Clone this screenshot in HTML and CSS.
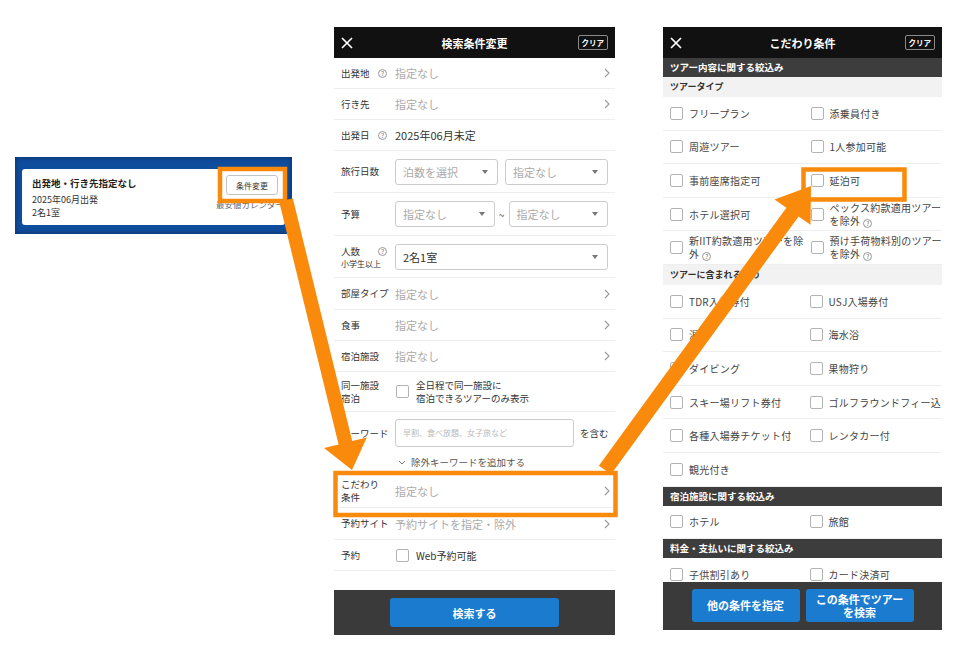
FILE: index.html
```html
<!DOCTYPE html>
<html lang="ja">
<head>
    <meta charset="UTF-8">
    <title>検索条件変更</title>
    <link rel="stylesheet" href="styles.css">
</head>
<body>
<div class="stage">

    <!-- search summary card -->
    <div class="summary">
        <div class="summary-card">
            <div class="summary-info">
                <p class="summary-title">出発地・行き先指定なし</p>
                <p>2025年06月出発</p>
                <p>2名1室</p>
            </div>
            <div class="summary-side">
                <button class="btn-change">条件変更</button>
                <span class="cal-link">最安値カレンダー</span>
            </div>
        </div>
    </div>

    <!-- search conditions panel -->
    <div class="panel panel-search">
        <div class="panel-head">
            <svg class="close" viewBox="0 0 12 12"><path d="M1 1L11 11M11 1L1 11" stroke="#fff" stroke-width="1.7"/></svg>
            <h1>検索条件変更</h1>
            <span class="clear">クリア</span>
        </div>
        <div class="panel-body">
            <div class="row">
                <div class="label">出発地<i class="help">?</i></div>
                <div class="value muted">指定なし</div>
                <svg class="chev" viewBox="0 0 6 10"><path d="M1 1l4 4-4 4" fill="none" stroke="#999" stroke-width="1.1"/></svg>
            </div>
            <div class="row">
                <div class="label">行き先</div>
                <div class="value muted">指定なし</div>
                <svg class="chev" viewBox="0 0 6 10"><path d="M1 1l4 4-4 4" fill="none" stroke="#999" stroke-width="1.1"/></svg>
            </div>
            <div class="row">
                <div class="label">出発日<i class="help">?</i></div>
                <div class="value">2025年06月未定</div>
            </div>
            <div class="row row-42">
                <div class="label">旅行日数</div>
                <div class="select-pair">
                    <div class="select">泊数を選択</div>
                    <div class="select">指定なし</div>
                </div>
            </div>
            <div class="row row-43">
                <div class="label">予算</div>
                <div class="select-pair tight">
                    <div class="select">指定なし</div>
                    <span class="tilde">~</span>
                    <div class="select">指定なし</div>
                </div>
            </div>
            <div class="row row-42">
                <div class="label label-stack">
                    <div class="label-line">人数<i class="help">?</i></div>
                    <small>小学生以上</small>
                </div>
                <div class="select-pair">
                    <div class="select filled">2名1室</div>
                </div>
            </div>
            <div class="row row-32">
                <div class="label">部屋タイプ</div>
                <div class="value muted">指定なし</div>
                <svg class="chev" viewBox="0 0 6 10"><path d="M1 1l4 4-4 4" fill="none" stroke="#999" stroke-width="1.1"/></svg>
            </div>
            <div class="row">
                <div class="label">食事</div>
                <div class="value muted">指定なし</div>
                <svg class="chev" viewBox="0 0 6 10"><path d="M1 1l4 4-4 4" fill="none" stroke="#999" stroke-width="1.1"/></svg>
            </div>
            <div class="row">
                <div class="label">宿泊施設</div>
                <div class="value muted">指定なし</div>
                <svg class="chev" viewBox="0 0 6 10"><path d="M1 1l4 4-4 4" fill="none" stroke="#999" stroke-width="1.1"/></svg>
            </div>
            <div class="row row-40">
                <div class="label label-two">同一施設<br>宿泊</div>
                <div class="value check-value">
                    <span class="check"></span>
                    <span class="small-text">全日程で同一施設に<br>宿泊できるツアーのみ表示</span>
                </div>
            </div>
            <div class="kw">
                <div class="kw-line">
                    <div class="label">キーワード</div>
                    <div class="kw-input">早割、食べ放題、女子旅など</div>
                    <span class="kw-suffix">を含む</span>
                </div>
                <div class="kw-more">
                    <svg class="chev-down" viewBox="0 0 8 5"><path d="M1 1l3 3 3-3" fill="none" stroke="#777" stroke-width="1"/></svg>
                    除外キーワードを追加する
                </div>
            </div>
            <div class="row row-33">
                <div class="label label-two">こだわり<br>条件</div>
                <div class="value muted">指定なし</div>
                <svg class="chev" viewBox="0 0 6 10"><path d="M1 1l4 4-4 4" fill="none" stroke="#999" stroke-width="1.1"/></svg>
            </div>
            <div class="row row-32">
                <div class="label">予約サイト</div>
                <div class="value muted">予約サイトを指定・除外</div>
                <svg class="chev" viewBox="0 0 6 10"><path d="M1 1l4 4-4 4" fill="none" stroke="#999" stroke-width="1.1"/></svg>
            </div>
            <div class="row">
                <div class="label">予約</div>
                <div class="value check-value">
                    <span class="check"></span>
                    <span class="web-text">Web予約可能</span>
                </div>
            </div>
        </div>
        <div class="panel-foot">
            <button class="btn-blue btn-search">検索する</button>
        </div>
    </div>

    <!-- kodawari panel -->
    <div class="panel panel-kodawari">
        <div class="panel-head">
            <svg class="close" viewBox="0 0 12 12"><path d="M1 1L11 11M11 1L1 11" stroke="#fff" stroke-width="1.7"/></svg>
            <h1>こだわり条件</h1>
            <span class="clear">クリア</span>
        </div>
        <div class="panel-body">
            <div class="sec">ツアー内容に関する絞込み</div>
            <div class="sub">ツアータイプ</div>
            <div class="opts">
                <div class="opt"><span class="check"></span><span>フリープラン</span></div>
                <div class="opt"><span class="check"></span><span>添乗員付き</span></div>
                <div class="opt"><span class="check"></span><span>周遊ツアー</span></div>
                <div class="opt"><span class="check"></span><span>1人参加可能</span></div>
                <div class="opt"><span class="check"></span><span>事前座席指定可</span></div>
                <div class="opt"><span class="check"></span><span>延泊可</span></div>
                <div class="opt"><span class="check"></span><span>ホテル選択可</span></div>
                <div class="opt"><span class="check"></span><span>ペックス約款適用ツアー<br>を除外<i class="help inline">?</i></span></div>
                <div class="opt"><span class="check"></span><span class="nowrap">新IIT約款適用ツアーを除<br>外<i class="help inline">?</i></span></div>
                <div class="opt"><span class="check"></span><span>預け手荷物料別のツアー<br>を除外<i class="help inline">?</i></span></div>
            </div>
            <div class="sub">ツアーに含まれるもの</div>
            <div class="opts">
                <div class="opt"><span class="check"></span><span>TDR入場券付</span></div>
                <div class="opt"><span class="check"></span><span>USJ入場券付</span></div>
                <div class="opt"><span class="check"></span><span>温泉</span></div>
                <div class="opt"><span class="check"></span><span>海水浴</span></div>
                <div class="opt"><span class="check"></span><span>ダイビング</span></div>
                <div class="opt"><span class="check"></span><span>果物狩り</span></div>
                <div class="opt"><span class="check"></span><span>スキー場リフト券付</span></div>
                <div class="opt"><span class="check"></span><span class="nowrap">ゴルフラウンドフィー込</span></div>
                <div class="opt"><span class="check"></span><span>各種入場券チケット付</span></div>
                <div class="opt"><span class="check"></span><span>レンタカー付</span></div>
                <div class="opt"><span class="check"></span><span>観光付き</span></div>
                <div class="opt"></div>
            </div>
            <div class="sec">宿泊施設に関する絞込み</div>
            <div class="opts">
                <div class="opt"><span class="check"></span><span>ホテル</span></div>
                <div class="opt"><span class="check"></span><span>旅館</span></div>
            </div>
            <div class="sec">料金・支払いに関する絞込み</div>
            <div class="opts">
                <div class="opt"><span class="check"></span><span>子供割引あり</span></div>
                <div class="opt"><span class="check"></span><span>カード決済可</span></div>
            </div>
        </div>
        <div class="panel-foot foot-two">
            <button class="btn-blue btn-half">他の条件を指定</button>
            <button class="btn-blue btn-half">この条件でツアー<br>を検索</button>
        </div>
    </div>

    <!-- orange annotations drawn over the screens -->
    <svg class="overlay" viewBox="0 0 961 658">
        <g fill="none" stroke="#f98a0b" stroke-width="4.5">
            <rect x="220" y="169" width="65" height="32"/>
            <rect x="335.5" y="473" width="280" height="42"/>
            <rect x="803.5" y="169.5" width="101" height="30"/>
        </g>
        <g fill="#f98a0b">
            <polygon points="279.2,201.7 292.8,198.3 352.2,441.1 366.8,437.6 352,470 324,448 338.6,444.5"/>
            <polygon points="598.9,465.7 611.1,474.3 798.6,216.4 810.5,224.8 811,186 774.5,199.4 786.4,207.8"/>
        </g>
    </svg>
</div>
</body>
</html>
```

FILE: styles.css
```css
* {
    box-sizing: border-box;
}
body {
    margin: 0;
    background: #fff;
    font-family: "Noto Sans CJK JP", "Noto Sans", sans-serif;
    color: #333;
}
p, h1 {
    margin: 0;
}
.stage {
    position: relative;
    width: 961px;
    height: 658px;
    display: flex;
    align-items: flex-start;
    padding: 27px 0 0 15px;
    overflow: hidden;
}

/* summary card on the left */
.summary {
    width: 277px;
    height: 77px;
    margin-top: 130px;
    padding: 12px 7px 9px 7px;
    background: #0e4c9c;
    box-shadow: inset 0 0 5px rgba(0, 0, 0, 0.4);
}
.summary-card {
    display: flex;
    height: 56px;
    background: #fff;
    border-radius: 3px;
    padding: 7px 7px 0 10px;
    overflow: hidden;
}
.summary-info {
    flex: 1;
    font-size: 9px;
    line-height: 13px;
    color: #333;
}
.summary-title {
    font-size: 9.5px;
    font-weight: bold;
    line-height: 14px;
    color: #222;
    margin-bottom: 2.5px;
}
.summary-side {
    display: flex;
    flex-direction: column;
    align-items: flex-end;
}
.btn-change {
    margin-top: -1px;
    width: 52px;
    height: 20px;
    padding: 0;
    font-family: inherit;
    font-size: 8px;
    color: #333;
    background: #fff;
    border: 1px solid #c4c4c4;
    border-radius: 3px;
}
.cal-link {
    margin-top: 3px;
    margin-right: -6px;
    font-size: 8.5px;
    color: #666;
    white-space: nowrap;
}

/* panels */
.panel {
    display: flex;
    flex-direction: column;
    background: #fff;
    overflow: hidden;
}
.panel-search {
    width: 281px;
    height: 608px;
    margin-left: 42px;
}
.panel-kodawari {
    width: 279px;
    height: 603px;
    margin-left: 48px;
}
.panel-head {
    height: 31px;
    flex-shrink: 0;
    display: grid;
    grid-template-columns: 50px 1fr 50px;
    align-items: center;
    padding: 0 7px;
    background: #111;
    color: #fff;
}
.panel-head h1 {
    font-size: 11px;
    font-weight: bold;
    text-align: center;
}
.close {
    width: 12px;
    height: 12px;
}
.clear {
    justify-self: end;
    height: 15px;
    padding: 0 3px;
    font-size: 7.5px;
    font-weight: bold;
    line-height: 13px;
    border: 1px solid #8a8a8a;
    border-radius: 2px;
}
.panel-body {
    flex: 1;
    display: flex;
    flex-direction: column;
    overflow: hidden;
}
.panel-foot {
    height: 45px;
    flex-shrink: 0;
    display: flex;
    justify-content: center;
    padding-top: 8px;
    background: #3a3a3a;
}
.btn-blue {
    border: none;
    border-radius: 3px;
    background: #1b7ccf;
    color: #fff;
    font-family: inherit;
    font-weight: bold;
    font-size: 11px;
    padding: 0;
}
.btn-search {
    width: 169px;
    height: 29px;
}
.foot-two {
    height: 48px;
    padding-top: 7px;
    gap: 6px;
}
.btn-half {
    width: 108px;
    height: 33px;
    line-height: 13px;
}

/* search rows */
.row {
    display: flex;
    align-items: center;
    flex-shrink: 0;
    height: 31px;
    padding: 0 7px;
    border-bottom: 1px solid #eee;
}
.row-32 { height: 32px; }
.row-33 { height: 33px; }
.row-40 { height: 40px; }
.row-42 { height: 42px; }
.row-43 { height: 43px; }
.label {
    width: 54px;
    flex-shrink: 0;
    display: flex;
    align-items: center;
    padding-right: 8px;
    font-size: 9.5px;
    line-height: 13px;
    color: #333;
    white-space: nowrap;
}
.label-two {
    display: block;
    line-height: 13px;
}
.label-stack {
    flex-direction: column;
    align-items: stretch;
}
.label-line {
    display: flex;
    align-items: center;
}
.label-stack small {
    font-size: 8px;
    line-height: 11px;
}
.help {
    margin-left: auto;
    width: 9px;
    height: 9px;
    border: 1px solid #999;
    border-radius: 50%;
    font-size: 6.5px;
    font-style: normal;
    line-height: 7px;
    text-align: center;
    color: #777;
}
.help.inline {
    display: inline-block;
    margin-left: 3px;
    vertical-align: -1px;
    letter-spacing: 0;
}
.value {
    flex: 1;
    font-size: 11px;
    color: #333;
}
.muted {
    color: #aaa;
}
.chev {
    width: 6px;
    height: 10px;
    margin-right: -2px;
}
.select-pair {
    flex: 1;
    display: flex;
    align-items: center;
    gap: 7px;
}
.select-pair.tight {
    gap: 0;
}
.select {
    position: relative;
    flex: 1;
    height: 26px;
    padding-left: 7px;
    font-size: 11px;
    line-height: 24px;
    color: #aaa;
    background: #fff;
    border: 1px solid #ccc;
    border-radius: 3px;
}
.select::after {
    content: "";
    position: absolute;
    right: 9px;
    top: 10px;
    border-left: 3.5px solid transparent;
    border-right: 3.5px solid transparent;
    border-top: 4px solid #777;
}
.select.filled {
    color: #333;
}
.tilde {
    width: 14px;
    text-align: center;
    font-size: 10px;
    color: #555;
}
.check-value {
    display: flex;
    align-items: center;
    gap: 7px;
    padding-left: 1px;
}
.check {
    width: 13px;
    height: 13px;
    flex-shrink: 0;
    background: #fff;
    border: 1px solid #b3b3b3;
    border-radius: 2px;
}
.small-text {
    font-size: 9.5px;
    line-height: 13px;
}
.web-text {
    font-size: 10px;
}

/* keyword */
.kw {
    height: 63px;
    flex-shrink: 0;
    padding: 7px 7px 0 7px;
    border-bottom: 1px solid #eee;
}
.kw-line {
    display: flex;
    align-items: center;
    height: 28px;
}
.kw-input {
    width: 179px;
    height: 28px;
    flex-shrink: 0;
    padding-left: 7px;
    font-size: 8px;
    line-height: 26px;
    color: #bbb;
    border: 1px solid #ccc;
    border-radius: 3px;
}
.kw-suffix {
    margin-left: 6px;
    font-size: 9.5px;
    white-space: nowrap;
}
.kw-more {
    display: flex;
    align-items: center;
    gap: 5px;
    margin: 8px 0 0 57px;
    font-size: 9.5px;
    color: #555;
}
.chev-down {
    width: 8px;
    height: 5px;
}

/* kodawari options */
.sec {
    height: 19px;
    flex-shrink: 0;
    padding-left: 7px;
    font-size: 9.5px;
    font-weight: bold;
    line-height: 19px;
    color: #fff;
    background: #3d3d3d;
}
.sub {
    height: 20px;
    flex-shrink: 0;
    padding-left: 7px;
    font-size: 9px;
    font-weight: bold;
    line-height: 20px;
    color: #333;
    background: #f2f2f2;
}
.opts {
    display: grid;
    grid-template-columns: 1fr 1fr;
    grid-auto-rows: 33.6px;
    flex-shrink: 0;
}
.opt {
    display: flex;
    align-items: center;
    gap: 6px;
    padding-left: 7px;
    font-size: 10px;
    letter-spacing: 0.25px;
    line-height: 13px;
    color: #444;
    border-bottom: 1px solid #eee;
}
.nowrap {
    white-space: nowrap;
}

.overlay {
    position: absolute;
    top: 0;
    left: 0;
    width: 961px;
    height: 658px;
    pointer-events: none;
}
```
